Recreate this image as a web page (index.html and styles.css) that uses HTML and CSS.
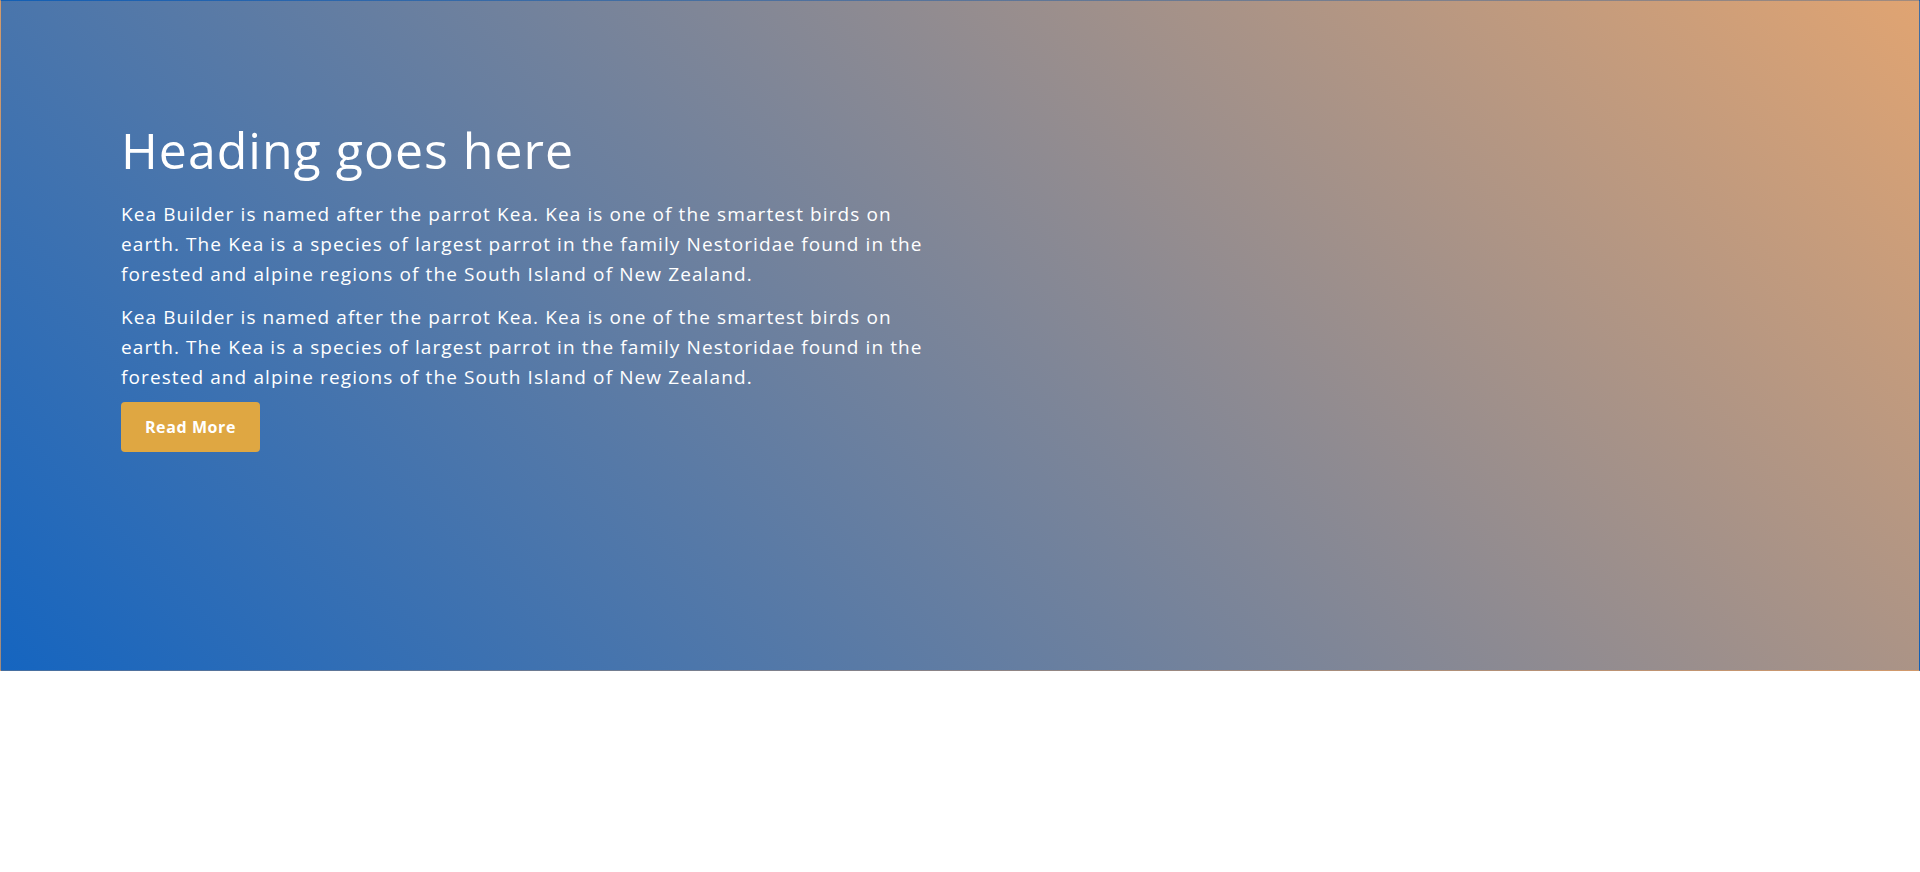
FILE: index.html
```html
<!DOCTYPE html>
<html lang="en">
<head>
<meta charset="utf-8">
<title>Heading goes here</title>
<link rel="stylesheet" href="styles.css">
</head>
<body>
<section class="hero">
  <div class="hero-content">
    <h1 class="hero-title">Heading goes here</h1>
    <p class="hero-text">Kea Builder is named after the parrot Kea. Kea is one of the smartest birds on earth. The Kea is a species of largest parrot in the family Nestoridae found in the forested and alpine regions of the South Island of New Zealand.</p>
    <p class="hero-text">Kea Builder is named after the parrot Kea. Kea is one of the smartest birds on earth. The Kea is a species of largest parrot in the family Nestoridae found in the forested and alpine regions of the South Island of New Zealand.</p>
    <a class="btn" href="#">Read More</a>
  </div>
</section>
</body>
</html>
```

FILE: styles.css
```css
* { box-sizing: border-box; }
html, body { margin: 0; padding: 0; background: #ffffff; }
body { font-family: "Open Sans", "Liberation Sans", sans-serif; color: #fff; }

.hero {
  height: 671px;
  padding: 119px 120px 0 120px;
  border: 1px solid rgba(0, 0, 0, 0.06);
  background: linear-gradient(45deg, #1565c0 0%, #e0a472 100%);
}

.hero-content {
  max-width: 815px;
  display: flex;
  flex-direction: column;
  align-items: flex-start;
}

.hero-title {
  margin: 0 0 19px 0;
  font-size: 50px;
  line-height: 60px;
  font-weight: 500;
  letter-spacing: 1px;
  color: #fff;
}

.hero-text {
  margin: 0 0 13px 0;
  font-size: 19px;
  line-height: 30px;
  font-weight: 400;
  letter-spacing: 1.1px;
  color: #fff;
}

.hero-text + .btn { margin-top: -3px; }

.btn {
  display: inline-flex;
  align-items: center;
  justify-content: center;
  width: 139px;
  height: 50px;
  border-radius: 4px;
  background: #dfa742;
  color: #fff;
  font-size: 16px;
  font-weight: 700;
  letter-spacing: 0.6px;
  text-decoration: none;
}
```
